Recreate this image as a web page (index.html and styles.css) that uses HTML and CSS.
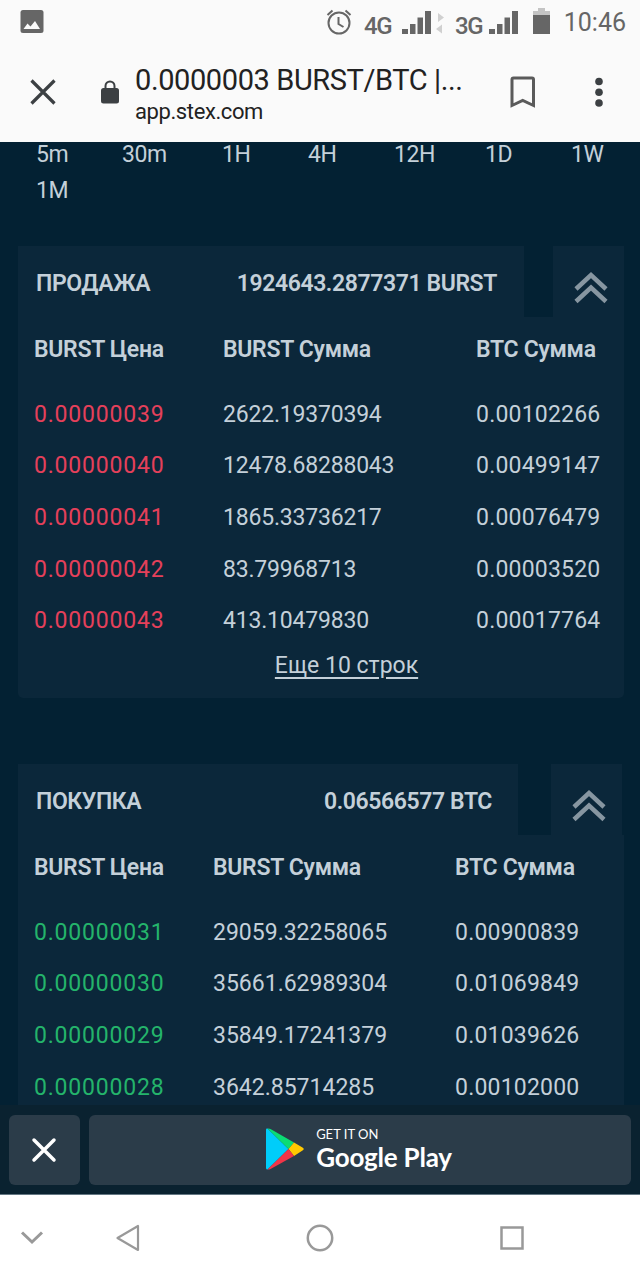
FILE: index.html
```
<!DOCTYPE html>
<html lang="ru">
<head>
    <meta charset="UTF-8">
    <meta name="viewport" content="width=device-width, initial-scale=1.0">
    <title>0.0000003 BURST/BTC | STEX</title>
    <link rel="stylesheet" href="styles.css">
</head>
<body>
    <div class="phone">
        <div class="status-bar">
            <svg class="picture" width="24" height="24" viewBox="0 0 24 24"><rect x="0.5" width="23" height="23" rx="2.5" fill="#666"/><path d="M3.5 19l4-5.5 3 3 4.500-5.500 5 8z" fill="#fafafa"/></svg>
            <svg class="alarm" width="26" height="26" viewBox="0 0 26 26" fill="none" stroke="#666" stroke-width="2"><circle cx="13" cy="14" r="10.500"/><path d="M12.500 8v7l5 3M1.500 6l5-4.500M19.500 1.500l5 4.500"/></svg>
            <span class="net net-4g">4G</span>
            <svg class="signal-4g" width="42" height="24" viewBox="0 0 42 24"><path d="M0 19h6v5H0zM8 14h5.500v10H8zM15.500 7.500H21V24h-5.500zM23 1h6v23h-6z" fill="#666"/><path d="M36 3l6 4.500-6 4.500zM40 14.500v9l-6-4.500z" fill="#d0d0d0"/></svg>
            <span class="net net-3g">3G</span>
            <svg class="signal-3g" width="29" height="24" viewBox="0 0 29 24"><path d="M0 19h6v5H0zM8 14h5.500v10H8zM15.500 7.500H21V24h-5.500zM23 1h6v23h-6z" fill="#666"/></svg>
            <svg class="battery" width="17" height="26" viewBox="0 0 17 26"><path d="M0 7V3h5V0h7v3h5v4z" fill="#c4c4c4"/><path d="M0 7h17v19H0z" fill="#666"/></svg>
            <span class="clock">10:46</span>
        </div>
        <div class="toolbar">
            <svg class="close" width="26" height="26" viewBox="0 0 26 26" stroke="#3c4043" stroke-width="3.200"><path d="M1.500 1.500l23 23M24.500 1.500l-23 23"/></svg>
            <svg class="lock" width="18" height="24" viewBox="0 0 18 24"><path d="M4.500 9V6a4.500 4.500 0 0 1 9 0v3" fill="none" stroke="#3c4043" stroke-width="2"/><rect y="8" width="18" height="15.500" rx="2.500" fill="#3c4043"/></svg>
            <div class="address">
                <div class="page-title">0.0000003 BURST/BTC |...</div>
                <div class="page-host">app.stex.com</div>
            </div>
            <svg class="bookmark" width="26" height="32" viewBox="0 0 26 32" fill="none" stroke="#5a5a5a" stroke-width="3"><path d="M2 29.500V3.500q0-1.500 1.500-1.500h18.500q1.500 0 1.500 1.500v26L12.700 24.500z"/></svg>
            <svg class="menu" width="8" height="30" viewBox="0 0 8 30" fill="#3c4043"><circle cx="4" cy="4.500" r="3.800"/><circle cx="4" cy="15.200" r="3.800"/><circle cx="4" cy="26" r="3.800"/></svg>
        </div>

        <main>
            <div class="intervals">
                <span>5m</span><span>30m</span><span>1H</span><span>4H</span><span>12H</span><span>1D</span><span>1W</span>
                <span>1M</span>
            </div>

            <section class="panel sell">
                <div class="panel-header">
                    <div class="panel-title"><h2>ПРОДАЖА</h2><strong>1924643.2877371 BURST</strong></div>
                    <div class="collapse"><svg width="34" height="34" viewBox="0 0 34 34" fill="none" stroke="#8796a1" stroke-width="4.500"><path d="M2 18L17 4l15 14M2 30.500l15-14 15 14"/></svg></div>
                </div>
                <div class="panel-body">
                    <table>
                        <thead>
                            <tr><th class="price">BURST Цена</th><th class="amount">BURST Сумма</th><th>BTC Сумма</th></tr>
                        </thead>
                        <tbody>
                            <tr><td>0.00000039</td><td>2622.19370394</td><td>0.00102266</td></tr>
                            <tr><td>0.00000040</td><td>12478.68288043</td><td>0.00499147</td></tr>
                            <tr><td>0.00000041</td><td>1865.33736217</td><td>0.00076479</td></tr>
                            <tr><td>0.00000042</td><td>83.79968713</td><td>0.00003520</td></tr>
                            <tr><td>0.00000043</td><td>413.10479830</td><td>0.00017764</td></tr>
                        </tbody>
                    </table>
                    <div class="more"><a href="#">Еще 10 строк</a></div>
                </div>
            </section>

            <section class="panel buy">
                <div class="panel-header">
                    <div class="panel-title"><h2>ПОКУПКА</h2><strong>0.06566577 BTC</strong></div>
                    <div class="collapse"><svg width="34" height="34" viewBox="0 0 34 34" fill="none" stroke="#8796a1" stroke-width="4.500"><path d="M2 18L17 4l15 14M2 30.500l15-14 15 14"/></svg></div>
                </div>
                <div class="panel-body">
                    <table>
                        <thead>
                            <tr><th class="price">BURST Цена</th><th class="amount">BURST Сумма</th><th>BTC Сумма</th></tr>
                        </thead>
                        <tbody>
                            <tr><td>0.00000031</td><td>29059.32258065</td><td>0.00900839</td></tr>
                            <tr><td>0.00000030</td><td>35661.62989304</td><td>0.01069849</td></tr>
                            <tr><td>0.00000029</td><td>35849.17241379</td><td>0.01039626</td></tr>
                            <tr><td>0.00000028</td><td>3642.85714285</td><td>0.00102000</td></tr>
                        </tbody>
                    </table>
                </div>
            </section>
        </main>

        <div class="app-banner">
            <button class="dismiss"><svg width="26" height="26" viewBox="0 0 26 26" stroke="#fff" stroke-width="3.500" stroke-linecap="round"><path d="M3 3l20 20M23 3L3 23"/></svg></button>
            <button class="store">
                <svg width="38" height="42" viewBox="0 0 38 42">
                    <path d="M0 1.500Q0 .3 1.500.5L22.500 21 1.500 41.500Q0 41.500 0 40z" fill="#00cdfa"/>
                    <path d="M1.500.5Q3 .2 4.500 1L28 14.500 22.500 21z" fill="#0bdc75"/>
                    <path d="M28 14.500l8.500 5q2.500 1.500 0 3L28 28l-5.500-7z" fill="#ffc900"/>
                    <path d="M22.500 21L28 28 4.500 41q-1.500.8-3 .5z" fill="#f23548"/>
                </svg>
                <span class="store-text"><small>GET IT ON</small><b>Google Play</b></span>
            </button>
        </div>

        <nav class="nav-bar">
            <svg width="24" height="16" viewBox="0 0 24 16" fill="none" stroke="#999" stroke-width="3"><path d="M2 2.500l10 9.500 10-9.500"/></svg>
            <svg width="26" height="28" viewBox="0 0 26 28" fill="none" stroke="#999" stroke-width="2.200" stroke-linejoin="round"><path d="M23 2v24L2.500 14z"/></svg>
            <svg width="28" height="28" viewBox="0 0 28 28" fill="none" stroke="#999" stroke-width="2.500"><circle cx="14" cy="14" r="12.200"/></svg>
            <svg width="24" height="24" viewBox="0 0 24 24" fill="none" stroke="#999" stroke-width="2.500"><rect x="1.500" y="1.500" width="21" height="21"/></svg>
        </nav>
    </div>
</body>
</html>
```

FILE: styles.css
```
* {
    box-sizing: border-box;
}
body {
    margin: 0;
    background-color: #fff;
    font-family: Roboto, "Noto Sans", sans-serif;
}
svg {
    display: block;
    flex: none;
}
.phone {
    display: flex;
    flex-direction: column;
    width: 640px;
    height: 1280px;
    overflow: hidden;
}

/* system status bar */
.status-bar {
    display: flex;
    align-items: flex-start;
    height: 44px;
    padding: 8px 14px 0 20px;
    background-color: #fafafa;
    color: #666;
    white-space: nowrap;
}
.picture {
    margin-top: 2px;
}
.alarm {
    margin-left: 282px;
    margin-top: 1px;
}
.net {
    font-size: 24px;
    font-weight: 500;
    line-height: 36px;
    letter-spacing: -1.3px;
}
.net-4g {
    width: 38px;
    margin-left: 12px;
}
.net-3g {
    width: 34px;
    margin-left: 11px;
}
.signal-4g, .signal-3g {
    margin-top: 2px;
}
.battery {
    margin-left: 15px;
}
.clock {
    margin-left: auto;
    font-size: 25px;
    line-height: 30px;
}

/* browser toolbar */
.toolbar {
    display: flex;
    align-items: flex-start;
    height: 98px;
    padding: 20px 37px 0 30px;
    background-color: #fafafa;
    color: #222;
}
.close {
    margin-top: 15px;
}
.lock {
    margin: 16px 16px 0 45px;
}
.address {
    width: 346px;
    white-space: nowrap;
}
.page-title {
    font-size: 29px;
    line-height: 32px;
    letter-spacing: -0.4px;
}
.page-host {
    font-size: 22px;
    line-height: 32px;
    letter-spacing: -0.4px;
}
.bookmark {
    margin: 12px 0 0 29px;
}
.menu {
    margin: 13px 0 0 auto;
}

/* exchange page */
main {
    flex: 1;
    overflow: hidden;
    background-color: #032133;
    color: #c4d0d9;
    font-size: 23px;
}
.intervals {
    display: grid;
    grid-template-columns: 86px 100px 86px 86px 91px 86px 1fr;
    row-gap: 11px;
    height: 104px;
    align-content: start;
    padding-left: 36px;
    line-height: 25px;
    letter-spacing: -0.4px;
}
.panel {
    width: 606px;
    margin-left: 18px;
}
.panel-header {
    display: flex;
    justify-content: space-between;
    height: 71px;
}
.panel-title {
    display: flex;
    justify-content: space-between;
    align-items: center;
    width: 506px;
    padding: 3px 27px 0 18px;
    background-color: #0b273a;
    letter-spacing: -0.4px;
}
.panel-title h2, .panel-title strong {
    margin: 0;
    font-size: 23px;
    font-weight: 600;
}
.collapse {
    display: flex;
    justify-content: center;
    align-items: center;
    width: 71px;
    padding: 12px 0 0 4px;
    background-color: #0b273a;
}
.panel-body {
    background-color: #0b273a;
    border-radius: 0 0 5px 5px;
}
table {
    width: 100%;
    table-layout: fixed;
    border-collapse: collapse;
}
th, td {
    padding: 0 0 0 16px;
    text-align: left;
    white-space: nowrap;
}
th {
    height: 71px;
    padding-bottom: 7px;
    font-weight: 600;
    letter-spacing: -0.3px;
}
td {
    height: 51.600px;
    padding-top: 1px;
}
td:first-child {
    letter-spacing: 0.8px;
}
td:last-child {
    letter-spacing: 0.2px;
}
.sell {
    margin-bottom: 66px;
}
.sell .panel-body {
    height: 381px;
}
.sell .price {
    width: 189px;
}
.sell .amount {
    width: 253px;
}
.sell td:nth-child(2) {
    letter-spacing: -0.2px;
}
.sell td:first-child {
    color: #e5405a;
}
.more {
    padding: 6px 0 0 51px;
    text-align: center;
    line-height: 27px;
}
.more a {
    color: inherit;
    text-underline-offset: 4px;
}
.buy .panel-title {
    width: 500px;
    padding-right: 26px;
}
.buy .collapse {
    margin-right: 2px;
}
.buy .panel-body {
    height: 300px;
}
.buy .price {
    width: 179px;
}
.buy .amount {
    width: 242px;
}
.buy td:first-child {
    color: #24b46b;
}

/* install banner */
.app-banner {
    display: flex;
    gap: 9px;
    height: 90px;
    padding: 10px 9px 9px;
    background-color: #0a2230;
    border-bottom: 1px solid #647783;
}
.app-banner button {
    display: flex;
    align-items: center;
    justify-content: center;
    padding: 0;
    border: none;
    border-radius: 6px;
    background-color: #2b3c49;
    color: #fff;
}
.app-banner .dismiss {
    width: 71px;
    padding-right: 2px;
}
.app-banner .store {
    flex: 1;
    gap: 12px;
    padding: 0 2px 2px 0;
}
.store-text {
    display: flex;
    flex-direction: column;
    font-family: Lato, sans-serif;
    text-align: left;
}
.store-text small {
    font-size: 13px;
    line-height: 16px;
}
.store-text b {
    font-size: 26px;
    line-height: 30px;
    letter-spacing: -0.2px;
}

/* system navigation */
.nav-bar {
    display: flex;
    align-items: center;
    height: 85px;
    padding-left: 20px;
    background-color: #fff;
}
.nav-bar svg:nth-child(2) {
    margin-left: 71px;
}
.nav-bar svg:nth-child(3) {
    margin-left: 165px;
}
.nav-bar svg:nth-child(4) {
    margin-left: 166px;
}
```
